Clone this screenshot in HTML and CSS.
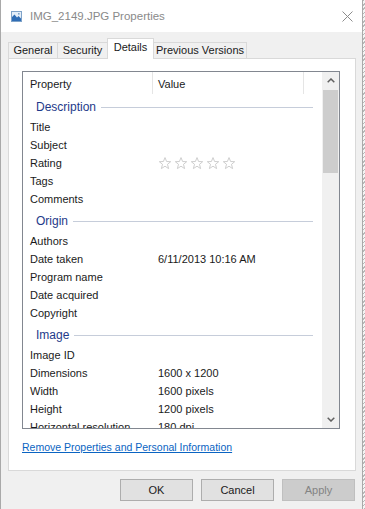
FILE: index.html
```html
<!DOCTYPE html>
<html lang="en">
<head>
<meta charset="UTF-8">
<title>IMG_2149.JPG Properties</title>
<link rel="stylesheet" href="styles.css">
</head>
<body>

<div class="window">
  <!-- title bar -->
  <div class="titlebar">
    <svg class="app-icon" width="11" height="11" viewBox="0 0 11 11">
      <rect x="0.5" y="0.5" width="10" height="10" fill="#e4eef8" stroke="#7fa3c9"/>
      <path d="M1 10 L1 6 L3.5 3.5 L6 6.5 L7.5 5 L10 7.5 L10 10 Z" fill="#2f6db5"/>
      <rect x="7" y="2" width="1.6" height="1.6" fill="#7fa3c9"/>
    </svg>
    <span class="title">IMG_2149.JPG Properties</span>
    <svg class="close" width="11" height="11" viewBox="0 0 11 11">
      <path d="M0.5 0.5 L10.5 10.5 M10.5 0.5 L0.5 10.5" stroke="#8c8c8c" stroke-width="1"/>
    </svg>
  </div>

  <div class="content">
    <!-- tabs -->
    <div class="tabs">
      <div class="tab tab-general">General</div>
      <div class="tab tab-security">Security</div>
      <div class="tab tab-details active">Details</div>
      <div class="tab tab-prev">Previous Versions</div>
    </div>

    <div class="panel">
      <div class="listbox">
        <div class="list">
          <div class="list-head">
            <div class="head-prop">Property</div>
            <div class="head-val">Value</div>
          </div>

          <div class="rows">
            <div class="group">Description</div>
            <div class="row"><span class="prop">Title</span><span class="val"></span></div>
            <div class="row"><span class="prop">Subject</span><span class="val"></span></div>
            <div class="row">
              <span class="prop">Rating</span>
              <span class="val">
                <svg class="stars" width="78" height="13" viewBox="0 0 78 13">
                  <g fill="none" stroke="#c8c8c8" stroke-width="0.9" stroke-linejoin="round">
                    <polygon points="6,0.6 7.6,4.5 11.7,4.7 8.5,7.3 9.6,11.6 6,9.2 2.4,11.6 3.5,7.3 0.3,4.7 4.4,4.5"/>
                    <polygon transform="translate(16,0)" points="6,0.6 7.6,4.5 11.7,4.7 8.5,7.3 9.6,11.6 6,9.2 2.4,11.6 3.5,7.3 0.3,4.7 4.4,4.5"/>
                    <polygon transform="translate(32,0)" points="6,0.6 7.6,4.5 11.7,4.7 8.5,7.3 9.6,11.6 6,9.2 2.4,11.6 3.5,7.3 0.3,4.7 4.4,4.5"/>
                    <polygon transform="translate(48,0)" points="6,0.6 7.6,4.5 11.7,4.7 8.5,7.3 9.6,11.6 6,9.2 2.4,11.6 3.5,7.3 0.3,4.7 4.4,4.5"/>
                    <polygon transform="translate(64,0)" points="6,0.6 7.6,4.5 11.7,4.7 8.5,7.3 9.6,11.6 6,9.2 2.4,11.6 3.5,7.3 0.3,4.7 4.4,4.5"/>
                  </g>
                </svg>
              </span>
            </div>
            <div class="row"><span class="prop">Tags</span><span class="val"></span></div>
            <div class="row"><span class="prop">Comments</span><span class="val"></span></div>

            <div class="group">Origin</div>
            <div class="row"><span class="prop">Authors</span><span class="val"></span></div>
            <div class="row"><span class="prop">Date taken</span><span class="val">6/11/2013 10:16 AM</span></div>
            <div class="row"><span class="prop">Program name</span><span class="val"></span></div>
            <div class="row"><span class="prop">Date acquired</span><span class="val"></span></div>
            <div class="row"><span class="prop">Copyright</span><span class="val"></span></div>

            <div class="group">Image</div>
            <div class="row"><span class="prop">Image ID</span><span class="val"></span></div>
            <div class="row"><span class="prop">Dimensions</span><span class="val">1600 x 1200</span></div>
            <div class="row"><span class="prop">Width</span><span class="val">1600 pixels</span></div>
            <div class="row"><span class="prop">Height</span><span class="val">1200 pixels</span></div>
            <div class="row"><span class="prop">Horizontal resolution</span><span class="val">180 dpi</span></div>
          </div>
        </div>

        <!-- scrollbar -->
        <div class="scrollbar">
          <div class="sb-btn">
            <svg width="8" height="5" viewBox="0 0 8 5"><polyline points="0.7,4.3 4,1 7.3,4.3" fill="none" stroke="#606060" stroke-width="1.5"/></svg>
          </div>
          <div class="sb-thumb"></div>
          <div class="sb-track"></div>
          <div class="sb-btn">
            <svg width="8" height="5" viewBox="0 0 8 5"><polyline points="0.7,0.7 4,4 7.3,0.7" fill="none" stroke="#606060" stroke-width="1.5"/></svg>
          </div>
        </div>
      </div>

      <a href="#" class="link">Remove Properties and Personal Information</a>
    </div>

    <!-- dialog buttons -->
    <div class="buttons">
      <div class="btn">OK</div>
      <div class="btn">Cancel</div>
      <div class="btn disabled">Apply</div>
    </div>
  </div>
</div>

</body>
</html>
```

FILE: styles.css
```css
/* reset */
* {
  margin: 0;
  padding: 0;
  box-sizing: border-box;
}

body {
  font-family: "Liberation Sans", Arial, sans-serif;
  font-size: 11px;
  color: #1a1a1a;
  width: 365px;
  height: 509px;
  overflow: hidden;
  background: repeating-linear-gradient(135deg, #f4f4f4 0 2px, #b8b8b8 2px 3px);
}

a {
  color: inherit;
}

/* window frame */
.window {
  width: 363px;
  height: 509px;
  background: #f0f0f0;
  border-left: 1px solid #a9a9a9;
  border-right: 1px solid #a9a9a9;
  display: flex;
  flex-direction: column;
}

.titlebar {
  height: 32px;
  background: #fff;
  display: flex;
  align-items: center;
  padding-left: 10px;
  flex-shrink: 0;
}

.app-icon {
  display: block;
  margin-top: 1px;
}

.title {
  margin-left: 8px;
  color: #8a8a8a;
  font-size: 11.5px;
}

.close {
  display: block;
  margin-left: auto;
  margin-right: 9px;
}

/* gray client area */
.content {
  padding: 6px 6px 0 7px;
  flex: 1;
}

/* tabs */
.tabs {
  height: 20px;
  display: flex;
  align-items: flex-end;
}

.tab {
  height: 16px;
  border: 1px solid #d9d9d9;
  border-bottom: none;
  margin-right: -1px;
  background: #f0f0f0;
  text-align: center;
  line-height: 15px;
  white-space: nowrap;
}

.tab-general { width: 50px; }
.tab-security { width: 51px; }
.tab-details { width: 47px; }
.tab-prev { width: 94px; }

.tab.active {
  height: 21px;
  margin-bottom: -1px;
  background: #fff;
  position: relative;
  z-index: 1;
  line-height: 17px;
}

/* tab page */
.panel {
  height: 413px;
  border: 1px solid #d9d9d9;
  background: #fff;
  padding: 12px 15px 0 13px;
}

.listbox {
  height: 358px;
  border: 1px solid #828790;
  display: flex;
}

.list {
  flex: 1;
  overflow: hidden;
}

.list-head {
  height: 22px;
  display: flex;
}

.head-prop {
  width: 130px;
  padding-left: 7px;
  border-right: 1px solid #e5e5e5;
  line-height: 24px;
}

.head-val {
  width: 151px;
  padding-left: 5px;
  border-right: 1px solid #e5e5e5;
  line-height: 24px;
}

.rows {
  height: 334px;
  overflow: hidden;
}

.group {
  height: 24px;
  display: flex;
  align-items: center;
  padding: 2px 0 0 13px;
  color: #1e3a8a;
  font-size: 12px;
}

.group::after {
  content: "";
  flex: 1;
  height: 1px;
  background: #c6cdda;
  margin: 0 9px 0 5px;
}

.row {
  height: 18px;
  display: flex;
  align-items: center;
  white-space: nowrap;
}

.prop {
  width: 135px;
  padding-left: 7px;
  flex-shrink: 0;
}

.stars {
  display: block;
  margin-left: 1px;
}

/* scrollbar */
.scrollbar {
  width: 17px;
  background: #f0f0f0;
  display: flex;
  flex-direction: column;
}

.sb-btn {
  height: 17px;
  display: flex;
  align-items: center;
  justify-content: center;
}

.sb-btn svg {
  display: block;
}

.sb-thumb {
  height: 83px;
  margin: 1px 1px 0;
  background: #cdcdcd;
}

.sb-track {
  flex: 1;
}

.link {
  display: block;
  width: fit-content;
  margin-top: 11px;
  line-height: 15px;
  font-size: 10.5px;
  color: #0a64c2;
  text-decoration: underline;
}

/* dialog buttons */
.buttons {
  display: flex;
  justify-content: flex-end;
  gap: 8px;
  margin-top: 8px;
  padding-right: 1px;
}

.btn {
  width: 73px;
  height: 22px;
  line-height: 20px;
  text-align: center;
  background: #e1e1e1;
  border: 1px solid #adadad;
}

.btn.disabled {
  background: #cccccc;
  border-color: #bfbfbf;
  color: #838383;
}
```
